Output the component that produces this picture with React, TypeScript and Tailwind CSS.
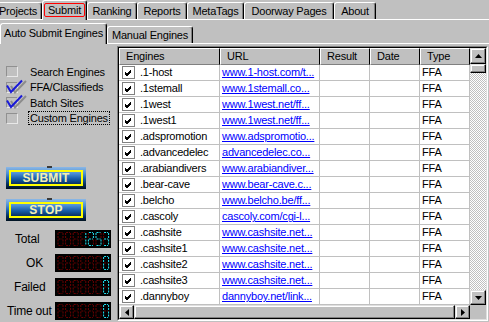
import React from 'react';

const rows: [string, string][] = [
  ['.1-host', 'www.1-host.com/t...'],
  ['.1stemall', 'www.1stemall.co...'],
  ['.1west', 'www.1west.net/ff...'],
  ['.1west1', 'www.1west.net/ff...'],
  ['.adspromotion', 'www.adspromotio...'],
  ['.advancedelec', 'advancedelec.co...'],
  ['.arabiandivers', 'www.arabiandiver...'],
  ['.bear-cave', 'www.bear-cave.c...'],
  ['.belcho', 'www.belcho.be/ff...'],
  ['.cascoly', 'cascoly.com/cgi-l...'],
  ['.cashsite', 'www.cashsite.net...'],
  ['.cashsite1', 'www.cashsite.net...'],
  ['.cashsite2', 'www.cashsite.net...'],
  ['.cashsite3', 'www.cashsite.net...'],
  ['.dannyboy', 'dannyboy.net/link...'],
];

// 7 segment map: a b c d e f g
const SEGS: Record<string, string> = {
  '0': 'abcdef',
  '1': 'bc',
  '2': 'abged',
  '3': 'abgcd',
  '4': 'fgbc',
  '5': 'afgcd',
  '6': 'afgedc',
  '7': 'abc',
  '8': 'abcdefg',
  '9': 'abcdfg',
  ' ': '',
};

function Led({ value }: { value: string }) {
  const lines: React.ReactNode[] = [];
  value.split('').forEach((ch, i) => {
    const ox = 2.5 + i * 7.6;
    const oy = 2.5;
    const on = SEGS[ch] || '';
    const seg: Record<string, [number, number, number, number]> = {
      a: [ox + 1, oy, ox + 5, oy],
      b: [ox + 5.5, oy + 0.5, ox + 5.5, oy + 6],
      c: [ox + 5.5, oy + 7, ox + 5.5, oy + 12.5],
      d: [ox + 1, oy + 13, ox + 5, oy + 13],
      e: [ox + 0.5, oy + 7, ox + 0.5, oy + 12.5],
      f: [ox + 0.5, oy + 0.5, ox + 0.5, oy + 6],
      g: [ox + 1, oy + 6.5, ox + 5, oy + 6.5],
    };
    Object.entries(seg).forEach(([k, [x1, y1, x2, y2]]) => {
      lines.push(
        <line
          key={i + k}
          x1={x1}
          y1={y1}
          x2={x2}
          y2={y2}
          stroke={on.includes(k) ? '#22e4f4' : '#6a0000'}
          strokeWidth={1}
          strokeDasharray="2 1"
        />
      );
    });
  });
  return (
    <svg width="56" height="18" className="bg-black block">
      {lines}
    </svg>
  );
}

const btn =
  'bg-[#c0c0c0] border border-t-[#dfdfdf] border-l-[#dfdfdf] border-r-black border-b-black shadow-[inset_-1px_-1px_#808080,inset_1px_1px_#ffffff] flex items-center justify-center';

function Arrow({ dir }: { dir: 'up' | 'down' | 'left' | 'right' }) {
  const pts = {
    up: '3.5,0 7,4 0,4',
    down: '0,0 7,0 3.5,4',
    left: '4,0 4,7 0,3.5',
    right: '0,0 0,7 4,3.5',
  }[dir];
  const vert = dir === 'up' || dir === 'down';
  return (
    <svg width={vert ? 7 : 4} height={vert ? 4 : 7}>
      <polygon points={pts} fill="#000" />
    </svg>
  );
}

function SideCheck({ label, checked, focus }: { label: string; checked?: boolean; focus?: boolean }) {
  return (
    <div className="h-[15.5px] flex items-center">
      <div className="relative w-[12px] h-[11px] border border-t-[#909090] border-l-[#909090] border-r-[#e8e8e8] border-b-[#e8e8e8]">
        {checked && (
          <svg width="22" height="16" className="absolute left-[-2px] top-[-5px]">
            <polyline points="6,8 10,14.5 21,3" fill="none" stroke="#8c8c8c" strokeWidth="2" />
            <polyline points="2,7.5 6,14 17,2.5" fill="none" stroke="#1a1ad8" strokeWidth="2" />
          </svg>
        )}
      </div>
      <span
        className={
          'ml-[10px] leading-[12px] ' +
          (focus ? 'border border-dotted border-black px-px' : 'px-px border border-transparent')
        }
      >
        {label}
      </span>
    </div>
  );
}

function BlueButton({ label }: { label: string }) {
  return (
    <div className="relative w-[80px] h-[22px] ml-[6px] p-[3px] bg-[linear-gradient(to_bottom,#8cb8e6_0%,#4b8fd4_30%,#145aa6_55%,#062c58_80%,#00121f_100%)]">
      <div className="absolute top-[-1px] left-[41px] w-[5px] h-[2px] bg-[#3a3a3a]" />
      <div className="h-full border-2 border-[#ffff00] flex items-center justify-center text-[12px] font-bold text-[#f2f0b4] tracking-[0.2px]">
        {label}
      </div>
    </div>
  );
}

export default function App() {
  const cols = ['w-[101px]', 'w-[100px]', 'w-[50px]', 'w-[50px]', 'w-[50px]'];
  const tab =
    'bg-[#c0c0c0] border-l border-t border-white border-r border-r-black shadow-[inset_-1px_0_#808080] rounded-t-[3px] flex items-center justify-center';
  return (
    <div className="w-[489px] h-[322px] overflow-hidden bg-[#c0c0c0] text-black text-[11px] tracking-[-0.2px] font-['Liberation_Sans',Arial,sans-serif]">
      {/* top tabs */}
      <div className="flex h-[20px] border-b border-white">
        <div className={tab + ' ml-[-6px] w-[48px] mt-[2px] h-[17px]'}>Projects</div>
        <div className={tab + ' relative z-10 w-[45px] h-[20px] items-start pt-[2px]'}>
          <span className="border border-[#ff0000] rounded-[2px] px-[3px] h-[14px] leading-[12px]">Submit</span>
        </div>
        <div className={tab + ' w-[50px] mt-[2px] h-[17px]'}>Ranking</div>
        <div className={tab + ' w-[50px] mt-[2px] h-[17px]'}>Reports</div>
        <div className={tab + ' w-[57px] mt-[2px] h-[17px]'}>MetaTags</div>
        <div className={tab + ' w-[90px] mt-[2px] h-[17px]'}>Doorway Pages</div>
        <div className={tab + ' w-[42px] mt-[2px] h-[17px]'}>About</div>
      </div>

      {/* sub tabs */}
      <div className="flex h-[24px] border-b border-white">
        <div className={tab + ' relative z-10 w-[107px] mt-[3px] h-[21px] pb-[2px]'}>Auto Submit Engines</div>
        <div className={tab + ' w-[86px] mt-[6px] h-[17px]'}>Manual Engines</div>
      </div>

      <div className="flex h-[278px]">
        {/* left panel */}
        <div className="w-[117px] flex flex-col">
          <div className="pt-[20px] pl-[6px]">
            <SideCheck label="Search Engines" />
            <SideCheck label="FFA/Classifieds" checked />
            <SideCheck label="Batch Sites" checked />
            <SideCheck label="Custom Engines" focus />
          </div>
          <div className="mt-[41px]">
            <BlueButton label="SUBMIT" />
          </div>
          <div className="mt-[10px]">
            <BlueButton label="STOP" />
          </div>
          <div className="mt-[9px] flex flex-col gap-[6px] text-[12px]">
            {[
              ['Total', 'pl-[15px]', '   1253'],
              ['OK', 'pl-[26px]', '      0'],
              ['Failed', 'pl-[14px]', '      0'],
              ['Time out', 'pl-[7px]', '      0'],
            ].map(([l, p, v]) => (
              <div key={l} className="flex items-center h-[18px]">
                <div className={'w-[55px] ' + p}>{l}</div>
                <Led value={v} />
              </div>
            ))}
          </div>
        </div>

        {/* grid */}
        <div className="mt-[2px] w-[371px] h-[275px] border border-t-[#808080] border-l-[#808080] border-r-white border-b-white">
          <div className="h-full border border-t-black border-l-black border-r-[#dfdfdf] border-b-[#dfdfdf] flex flex-col">
            <div className="flex h-[257px]">
              <div className="w-[351px] bg-white overflow-hidden">
                <div className="flex h-[17px]">
                  {['Engines', 'URL', 'Result', 'Date', 'Type'].map((h, i) => (
                    <div
                      key={h}
                      className={
                        cols[i] +
                        ' bg-[#c0c0c0] border-t border-l border-t-white border-l-white border-r border-r-black border-b border-b-[#808080] pl-[6px] flex items-center'
                      }
                    >
                      {h}
                    </div>
                  ))}
                </div>
                {rows.map(([name, url]) => (
                  <div key={name + url} className="flex h-[16px]">
                    <div className={cols[0] + ' border-r border-b border-[#c0c0c0] flex items-center pl-[3px]'}>
                      <div className="w-[13px] h-[13px] border border-[#808080] bg-white flex items-center justify-center shrink-0">
                        <svg width="9" height="9">
                          <path d="M1 4 L3 6 L7 2 M1 5 L3 7 L7 3 M1 6 L3 8 L7 4" stroke="#000" strokeWidth="1" fill="none" />
                        </svg>
                      </div>
                      <span className="ml-[5px] whitespace-nowrap">{name}</span>
                    </div>
                    <div className={cols[1] + ' border-r border-b border-[#c0c0c0] flex items-center pl-[2px] overflow-hidden'}>
                      <span className="text-[#0000ff] underline whitespace-nowrap">{url}</span>
                    </div>
                    <div className={cols[2] + ' border-r border-b border-[#c0c0c0]'} />
                    <div className={cols[3] + ' border-r border-b border-[#c0c0c0]'} />
                    <div className={cols[4] + ' border-r border-b border-[#c0c0c0] flex items-center pl-[2px]'}>FFA</div>
                  </div>
                ))}
              </div>
              {/* vertical scrollbar */}
              <div className="w-[16px] flex flex-col">
                <div className={btn + ' h-[16px]'}>
                  <Arrow dir="up" />
                </div>
                <div className={btn + ' h-[9px]'} />
                <div className="flex-1 bg-[image:repeating-conic-gradient(#c0c0c0_0%_25%,#ffffff_0%_50%)] bg-[length:2px_2px]" />
                <div className={btn + ' h-[15px]'}>
                  <Arrow dir="down" />
                </div>
              </div>
            </div>
            {/* horizontal scrollbar */}
            <div className="flex h-[14px]">
              <div className="w-[351px] flex">
                <div className={btn + ' w-[15px]'}>
                  <Arrow dir="left" />
                </div>
                <div className={btn + ' flex-1'} />
                <div className={btn + ' w-[15px]'}>
                  <Arrow dir="right" />
                </div>
              </div>
              <div className="w-[16px] bg-[#c0c0c0]" />
            </div>
          </div>
        </div>
      </div>
    </div>
  );
}
